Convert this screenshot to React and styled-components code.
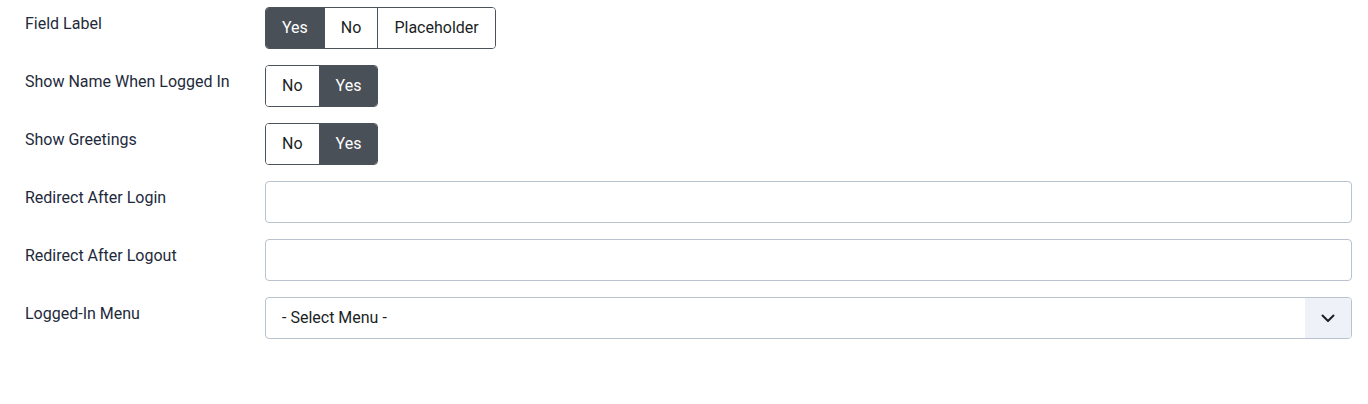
import React from "react";
import styled, { createGlobalStyle } from "styled-components";

const GlobalStyle = createGlobalStyle`
  html, body {
    margin: 0;
    padding: 0;
    background: #fff;
  }
  body {
    font-family: Roboto, "Noto Sans", "Liberation Sans", sans-serif;
    font-size: 16px;
    color: #1e2a3b;
  }
`;

const fields = [
  { label: "Field Label", type: "switch", options: ["Yes", "No", "Placeholder"], active: "Yes" },
  { label: "Show Name When Logged In", type: "switch", options: ["No", "Yes"], active: "Yes" },
  { label: "Show Greetings", type: "switch", options: ["No", "Yes"], active: "Yes" },
  { label: "Redirect After Login", type: "text" },
  { label: "Redirect After Logout", type: "text" },
  { label: "Logged-In Menu", type: "select", value: "- Select Menu -" },
];

export default function App() {
  return (
    <>
      <GlobalStyle />
      <Form>
        {fields.map((f) => (
          <Row key={f.label}>
            <Label>{f.label}</Label>
            <Control>
              {f.type === "switch" && (
                <Group>
                  {f.options.map((o) => (
                    <SwitchButton key={o} $active={o === f.active}>
                      {o}
                    </SwitchButton>
                  ))}
                </Group>
              )}
              {f.type === "text" && <TextInput />}
              {f.type === "select" && (
                <Select>
                  <SelectValue>{f.value}</SelectValue>
                  <Chevron>
                    <svg width="16" height="16" viewBox="0 0 16 16" fill="none">
                      <path
                        d="M2.5 5.5L8 11l5.5-5.5"
                        stroke="#1b1f24"
                        strokeWidth="2"
                        strokeLinecap="round"
                        strokeLinejoin="round"
                      />
                    </svg>
                  </Chevron>
                </Select>
              )}
            </Control>
          </Row>
        ))}
      </Form>
    </>
  );
}

const Form = styled.div`
  padding: 7px 16px 40px 25px;
`;

const Row = styled.div`
  display: flex;
  align-items: flex-start;
  margin-bottom: 16px;
`;

const Label = styled.div`
  width: 240px;
  flex-shrink: 0;
  padding-top: 5px;
  line-height: 24px;
  font-size: 16px;
  color: #1e2a3b;
`;

const Control = styled.div`
  flex: 1;
  min-width: 0;
`;

const Group = styled.div`
  display: inline-flex;
  border: 1px solid #4a525c;
  border-radius: 4px;
  overflow: hidden;
  height: 42px;
  box-sizing: border-box;
`;

const SwitchButton = styled.div`
  display: flex;
  align-items: center;
  padding: 0 16px 1px;
  font-size: 16px;
  color: ${(p) => (p.$active ? "#fff" : "#1b1f24")};
  background: ${(p) => (p.$active ? "#4a5058" : "#fff")};
  & + & {
    border-left: 1px solid #4a525c;
  }
`;

const TextInput = styled.div`
  height: 42px;
  box-sizing: border-box;
  border: 1px solid #b9c3ce;
  border-radius: 4px;
  background: #fff;
`;

const Select = styled.div`
  display: flex;
  height: 42px;
  box-sizing: border-box;
  border: 1px solid #b9c3ce;
  border-radius: 4px;
  overflow: hidden;
`;

const SelectValue = styled.div`
  flex: 1;
  display: flex;
  align-items: center;
  padding: 0 0 1px 16px;
  font-size: 16px;
  color: #1b1f24;
`;

const Chevron = styled.div`
  width: 46px;
  display: flex;
  align-items: center;
  justify-content: center;
  background: #eef2f8;
`;
